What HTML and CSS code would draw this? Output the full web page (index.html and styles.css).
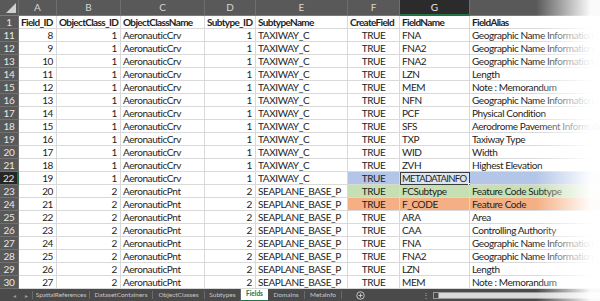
FILE: index.html
```html
<!DOCTYPE html>
<html lang="en">
<head>
  <meta charset="UTF-8" />
  <title>Fields</title>
  <link rel="stylesheet" href="styles.css">
</head>
<body>

<div class="sheet">
  <div class="grid">
    <div class="hd corner"><svg width="10" height="10" viewBox="0 0 10 10"><polygon points="10,0 10,10 0,10" fill="#d0d0d0"/></svg></div>
    <div class="hd">A</div><div class="hd">B</div><div class="hd">C</div><div class="hd">D</div>
    <div class="hd">E</div><div class="hd">F</div><div class="hd sel">G</div><div class="hd"></div>

    <div class="rn">1</div>
    <div class="c b">Field_ID</div><div class="c b">ObjectClass_ID</div><div class="c b">ObjectClassName</div><div class="c b">Subtype_ID</div>
    <div class="c b">SubtypeName</div><div class="c b">CreateField</div><div class="c b">FieldName</div><div class="c b">FieldAlias</div>

    <div class="rn">11</div><div class="c r">8</div><div class="c r">1</div><div class="c">AeronauticCrv</div><div class="c r">1</div><div class="c">TAXIWAY_C</div><div class="c m">TRUE</div><div class="c">FNA</div><div class="c">Geographic Name Information :</div>
    <div class="rn">12</div><div class="c r">9</div><div class="c r">1</div><div class="c">AeronauticCrv</div><div class="c r">1</div><div class="c">TAXIWAY_C</div><div class="c m">TRUE</div><div class="c">FNA2</div><div class="c">Geographic Name Information :</div>
    <div class="rn">13</div><div class="c r">10</div><div class="c r">1</div><div class="c">AeronauticCrv</div><div class="c r">1</div><div class="c">TAXIWAY_C</div><div class="c m">TRUE</div><div class="c">FNA2</div><div class="c">Geographic Name Information :</div>
    <div class="rn">14</div><div class="c r">11</div><div class="c r">1</div><div class="c">AeronauticCrv</div><div class="c r">1</div><div class="c">TAXIWAY_C</div><div class="c m">TRUE</div><div class="c">LZN</div><div class="c">Length</div>
    <div class="rn">15</div><div class="c r">12</div><div class="c r">1</div><div class="c">AeronauticCrv</div><div class="c r">1</div><div class="c">TAXIWAY_C</div><div class="c m">TRUE</div><div class="c">MEM</div><div class="c">Note : Memorandum</div>
    <div class="rn">16</div><div class="c r">13</div><div class="c r">1</div><div class="c">AeronauticCrv</div><div class="c r">1</div><div class="c">TAXIWAY_C</div><div class="c m">TRUE</div><div class="c">NFN</div><div class="c">Geographic Name Information :</div>
    <div class="rn">17</div><div class="c r">14</div><div class="c r">1</div><div class="c">AeronauticCrv</div><div class="c r">1</div><div class="c">TAXIWAY_C</div><div class="c m">TRUE</div><div class="c">PCF</div><div class="c">Physical Condition</div>
    <div class="rn">18</div><div class="c r">15</div><div class="c r">1</div><div class="c">AeronauticCrv</div><div class="c r">1</div><div class="c">TAXIWAY_C</div><div class="c m">TRUE</div><div class="c">SFS</div><div class="c">Aerodrome Pavement Information</div>
    <div class="rn">19</div><div class="c r">16</div><div class="c r">1</div><div class="c">AeronauticCrv</div><div class="c r">1</div><div class="c">TAXIWAY_C</div><div class="c m">TRUE</div><div class="c">TXP</div><div class="c">Taxiway Type</div>
    <div class="rn">20</div><div class="c r">17</div><div class="c r">1</div><div class="c">AeronauticCrv</div><div class="c r">1</div><div class="c">TAXIWAY_C</div><div class="c m">TRUE</div><div class="c">WID</div><div class="c">Width</div>
    <div class="rn">21</div><div class="c r">18</div><div class="c r">1</div><div class="c">AeronauticCrv</div><div class="c r">1</div><div class="c">TAXIWAY_C</div><div class="c m">TRUE</div><div class="c">ZVH</div><div class="c">Highest Elevation</div>
    <div class="rn sel">22</div><div class="c r">19</div><div class="c r">1</div><div class="c">AeronauticCrv</div><div class="c r">1</div><div class="c">TAXIWAY_C</div><div class="c m blue">TRUE</div><div class="c active">METADATAINFO<span class="handle"></span></div><div class="c blue"></div>
    <div class="rn">23</div><div class="c r">20</div><div class="c r">2</div><div class="c">AeronauticPnt</div><div class="c r">2</div><div class="c">SEAPLANE_BASE_P</div><div class="c m green">TRUE</div><div class="c green">FCSubtype</div><div class="c green">Feature Code Subtype</div>
    <div class="rn">24</div><div class="c r">21</div><div class="c r">2</div><div class="c">AeronauticPnt</div><div class="c r">2</div><div class="c">SEAPLANE_BASE_P</div><div class="c m orange">TRUE</div><div class="c orange">F_CODE</div><div class="c orange">Feature Code</div>
    <div class="rn">25</div><div class="c r">22</div><div class="c r">2</div><div class="c">AeronauticPnt</div><div class="c r">2</div><div class="c">SEAPLANE_BASE_P</div><div class="c m">TRUE</div><div class="c">ARA</div><div class="c">Area</div>
    <div class="rn">26</div><div class="c r">23</div><div class="c r">2</div><div class="c">AeronauticPnt</div><div class="c r">2</div><div class="c">SEAPLANE_BASE_P</div><div class="c m">TRUE</div><div class="c">CAA</div><div class="c">Controlling Authority</div>
    <div class="rn">27</div><div class="c r">24</div><div class="c r">2</div><div class="c">AeronauticPnt</div><div class="c r">2</div><div class="c">SEAPLANE_BASE_P</div><div class="c m">TRUE</div><div class="c">FNA</div><div class="c">Geographic Name Information :</div>
    <div class="rn">28</div><div class="c r">25</div><div class="c r">2</div><div class="c">AeronauticPnt</div><div class="c r">2</div><div class="c">SEAPLANE_BASE_P</div><div class="c m">TRUE</div><div class="c">FNA2</div><div class="c">Geographic Name Information :</div>
    <div class="rn">29</div><div class="c r">26</div><div class="c r">2</div><div class="c">AeronauticPnt</div><div class="c r">2</div><div class="c">SEAPLANE_BASE_P</div><div class="c m">TRUE</div><div class="c">LZN</div><div class="c">Length</div>
    <div class="rn">30</div><div class="c r">27</div><div class="c r">2</div><div class="c">AeronauticPnt</div><div class="c r">2</div><div class="c">SEAPLANE_BASE_P</div><div class="c m">TRUE</div><div class="c">MEM</div><div class="c">Note : Memorandum</div>
  </div>

  <div class="tabs">
    <span class="arrow">&#9666;</span><span class="arrow">&#9656;</span>
    <span class="tab t-spatial">SpatialReferences</span>
    <span class="tab t-dataset">DatasetContainers</span>
    <span class="tab t-classes">ObjectClasses</span>
    <span class="tab t-subtypes">Subtypes</span>
    <span class="tab t-fields on">Fields</span>
    <span class="tab t-domains">Domains</span>
    <span class="tab t-meta">MetaInfo</span>
    <span class="add"><svg width="9" height="9" viewBox="0 0 10 10"><circle cx="5" cy="5" r="4.2" fill="none" stroke="#cfcfcf" stroke-width="1"/><path d="M5 2.8v4.4M2.8 5h4.4" stroke="#cfcfcf" stroke-width="1"/></svg></span>
    <span class="dots">&#8942;</span>
    <span class="scroll"><span class="thumb"></span></span>
  </div>

  <div class="fade"></div>
</div>

</body>
</html>
```

FILE: styles.css
```css
* {
  box-sizing: border-box;
}

body {
  margin: 0;
  background: #fff;
  font-family: Lato, 'Liberation Sans', sans-serif;
}

.sheet {
  position: relative;
  width: 600px;
  height: 301px;
  overflow: hidden;
}

.grid {
  display: grid;
  grid-template-columns: 19px 38px 64px 84px 51px 92px 52px 70px 200px;
  grid-template-rows: 16px repeat(21, 13px);
  width: 670px;
}

.hd {
  background: #595959;
  color: #d6d6d6;
  font-size: 10px;
  line-height: 15px;
  text-align: center;
  border-right: 1px solid #6e6e6e;
  border-bottom: 1px solid #7a7a7a;
}

.hd.corner {
  display: flex;
  align-items: flex-end;
  justify-content: flex-end;
  padding: 0 2px 2px 0;
}

.hd.sel {
  background: #2b2b2b;
  border-bottom: 2px solid #217346;
  color: #e8e8e8;
}

.rn {
  background: #595959;
  color: #e6e6e6;
  font-size: 10px;
  line-height: 12px;
  text-align: center;
  letter-spacing: -0.2px;
  border-bottom: 1px solid #707070;
  border-right: 1px solid #707070;
}

.rn.sel {
  background: #262626;
  border-right: 2px solid #217346;
}

.c {
  position: relative;
  font-size: 10px;
  line-height: 12px;
  letter-spacing: -0.4px;
  color: #1e1e1e;
  padding: 0 2px;
  white-space: nowrap;
  overflow: hidden;
  border-right: 1px solid #d9d9d9;
  border-bottom: 1px solid #d9d9d9;
}

.c.b {
  font-weight: bold;
  letter-spacing: -0.65px;
}

.c.r {
  text-align: right;
  padding-right: 3px;
}

.c.m {
  text-align: center;
}

.blue {
  background: #b4c6e7;
}

.green {
  background: #c6e0b4;
}

.orange {
  background: #f4b084;
}

.c.active {
  background: #dce4f2;
  border: 1px solid #3c3c3c;
  overflow: visible;
  padding-left: 1px;
  font-size: 9.5px;
  line-height: 11px;
  letter-spacing: -0.7px;
}

.handle {
  position: absolute;
  right: -3px;
  bottom: -3px;
  width: 4px;
  height: 4px;
  background: #217346;
  border: 1px solid #fff;
}

.tabs {
  display: flex;
  align-items: center;
  height: 12px;
  background: #4a4a4a;
  color: #c8c8c8;
  font-size: 6.5px;
}

.arrow {
  width: 12px;
  text-align: center;
  font-size: 6px;
  color: #9a9a9a;
}

.arrow:first-child {
  margin-left: 8px;
}

.tab {
  text-align: center;
  border-left: 1px solid #6a6a6a;
  line-height: 8px;
  white-space: nowrap;
}

.tab:first-of-type {
  margin-left: 18px;
}

.t-spatial { width: 57px; }
.t-dataset { width: 63px; }
.t-classes { width: 52px; }
.t-subtypes { width: 36px; }
.t-domains { width: 36px; }
.t-meta { width: 38px; border-right: 1px solid #6a6a6a; }

.tab.on {
  width: 28px;
  background: #fff;
  color: #217346;
  font-weight: bold;
  line-height: 12px;
  border-bottom: 2px solid #217346;
}

.tab.on + .tab {
  border-left: none;
}

.add {
  display: flex;
  margin-left: 14px;
}

.dots {
  margin-left: 57px;
  font-size: 8px;
  color: #bbb;
}

.scroll {
  display: flex;
  margin-left: 3px;
  height: 7px;
  flex: 1;
  border: 1px solid #9a9a9a;
  background: #d8d8d8;
}

.thumb {
  width: 5px;
  background: #4a4a4a;
  border-right: 1px solid #9a9a9a;
}

.fade {
  position: absolute;
  top: 0;
  right: 0;
  bottom: 0;
  width: 64px;
  background: linear-gradient(to right, rgba(255,255,255,0), rgba(255,255,255,0.97) 85%);
  pointer-events: none;
}
```
